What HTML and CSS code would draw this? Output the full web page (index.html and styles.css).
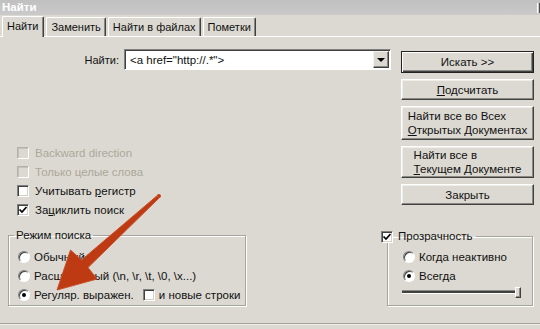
FILE: index.html
```html
<!DOCTYPE html>
<html lang="ru">
<head>
  <meta charset="UTF-8">
  <title>Найти</title>
  <link rel="stylesheet" href="styles.css">
</head>
<body>
  <div class="window">

    <!-- Заголовок окна -->
    <div class="titlebar">
      <span>Найти</span>
      <span class="tb-edge"></span>
    </div>

    <!-- Вкладки -->
    <div class="tabs">
      <div class="tab active">Найти</div>
      <div class="tab">Заменить</div>
      <div class="tab">Найти в файлах</div>
      <div class="tab">Пометки</div>
    </div>

    <div class="panel">
      <div class="top">
        <div class="left">
          <div class="find-row">
            <label>Найти:</label>
            <div class="combo">
              <span class="combo-text">&lt;a href="http://.*"&gt;</span>
              <span class="combo-btn"><span class="tri"></span></span>
            </div>
          </div>

          <div class="checks">
            <div class="check disabled"><span class="cb"></span><span>Backward direction</span></div>
            <div class="check disabled"><span class="cb"></span><span>Только целые слова</span></div>
            <div class="check"><span class="cb"></span><span>Учитывать <u>р</u>егистр</span></div>
            <div class="check"><span class="cb checked"><svg viewBox="0 0 10 10"><path d="M1.5 4.5 L4 7 L8.5 2" /></svg></span><span>За<u>ц</u>иклить поиск</span></div>
          </div>
        </div>

        <div class="buttons">
          <div class="btn default">Искать &gt;&gt;</div>
          <div class="btn"><span><u>П</u>одсчитать</span></div>
          <div class="btn tall"><span>Найти все во Всех<br><u>О</u>ткрытых Документах</span></div>
          <div class="btn tall2"><span>Найти все в<br><u>Т</u>екущем Документе</span></div>
          <div class="btn">Закрыть</div>
        </div>
      </div>

      <div class="groups">
        <fieldset class="group mode">
          <legend>Режим поиска</legend>
          <div class="rows">
            <div class="rrow"><span class="rb"></span>Обычный</div>
            <div class="rrow"><span class="rb"></span>Расширенный (\n, \r, \t, \0, \x...)</div>
            <div class="rrow"><span class="rb on"></span>Регуляр. выражен.<span class="cb sep"></span>и новые строки</div>
          </div>
        </fieldset>

        <fieldset class="group transp">
          <legend><span class="cb checked"><svg viewBox="0 0 10 10"><path d="M1.5 4.5 L4 7 L8.5 2" /></svg></span>Прозрачность</legend>
          <div class="rows">
            <div class="rrow"><span class="rb"></span>Когда неактивно</div>
            <div class="rrow"><span class="rb on"></span>Всегда</div>
            <div class="slider"><span class="track"></span><span class="thumb"></span></div>
          </div>
        </fieldset>
      </div>
    </div>

    <div class="footer"></div>

    <!-- Стрелка-подсказка поверх окна -->
    <svg class="arrow" width="540" height="329" viewBox="0 0 540 329">
      <polygon points="158,194.9 81.5,260 70.5,250 57,290 97,279 88,267.5 160,197.1" />
      <circle cx="159" cy="196" r="1.6" />
    </svg>
  </div>
</body>
</html>
```

FILE: styles.css
```css
/* Окно в стиле Windows XP classic */
body {
  margin: 0;
  font: 11px "Liberation Sans", Arial, sans-serif;
  color: #111;
  background: #dcd9d2;
}

.window {
  position: relative;
  width: 540px;
  height: 329px;
  overflow: hidden;
  background: #dcd9d2;
}

.titlebar {
  display: flex;
  height: 15px;
  padding-left: 2px;
  line-height: 15px;
  font-weight: bold;
  font-size: 11.5px;
  color: #fff;
  background: linear-gradient(#c0c0c0, #cacaca);
}

.tb-edge {
  margin-left: auto;
  width: 1px;
  height: 10px;
  margin-top: 3px;
  border-left: 1px solid #fff;
  border-right: 1px solid #505050;
}

/* Вкладки */
.tabs {
  display: flex;
  align-items: flex-end;
  gap: 2px;
  height: 21px;
  padding-left: 2px;
  border-bottom: 1px solid #fff;
}

.tab {
  height: 17px;
  padding: 1px 4px 0 4px;
  line-height: 16px;
  border: 1px solid #fff;
  border-right-color: #404040;
  border-bottom: none;
  border-radius: 2px 2px 0 0;
  box-shadow: inset -1px 0 #8a8882;
}

.tab.active {
  height: 20px;
  margin-bottom: -1px;
  padding: 0 5px 0 4px;
  line-height: 19px;
  background: #dcd9d2;
}

/* Верхняя часть */
.top {
  display: flex;
  height: 192px;
}

.left {
  width: 401px;
}

.find-row {
  display: flex;
  align-items: center;
  justify-content: flex-end;
  gap: 5px;
  margin-top: 12px;
  padding-right: 10px;
}

.combo {
  display: flex;
  align-items: center;
  box-sizing: border-box;
  width: 267px;
  height: 21px;
  border: 1px solid;
  border-color: #808080 #fff #fff #808080;
  box-shadow: inset 1px 1px #404040;
  background: #fff;
}

.combo-text {
  flex: 1;
  padding-left: 5px;
  font-size: 11.5px;
}

.combo-btn {
  display: flex;
  align-items: center;
  justify-content: center;
  box-sizing: border-box;
  width: 16px;
  height: 17px;
  margin-right: 1px;
  border: 1px solid;
  border-color: #f4f3ef #404040 #404040 #f4f3ef;
  box-shadow: inset -1px -1px #8a8882;
  background: #dcd9d2;
}

.tri {
  width: 0;
  height: 0;
  border-left: 4px solid transparent;
  border-right: 4px solid transparent;
  border-top: 4px solid #000;
  margin-top: 1px;
}

.checks {
  display: flex;
  flex-direction: column;
  margin-top: 73px;
  padding-left: 17px;
}

.check {
  display: flex;
  align-items: center;
  gap: 6px;
  height: 19px;
  font-size: 11.5px;
}

.check.disabled {
  color: #aca899;
}

.cb {
  position: relative;
  box-sizing: border-box;
  width: 12px;
  height: 12px;
  border: 1px solid;
  border-color: #808080 #fff #fff #808080;
  box-shadow: inset 1px 1px #404040, inset -1px -1px #d4d0c8;
  background: #fff;
}

.disabled .cb {
  border-color: #b4b1aa #fff #fff #b4b1aa;
  box-shadow: inset 1px 1px #c4c1ba;
  background: #dcd9d2;
}

.cb svg {
  display: block;
  width: 10px;
  height: 10px;
}

.cb path {
  fill: none;
  stroke: #000;
  stroke-width: 1.7;
}

/* Кнопки справа */
.buttons {
  display: flex;
  flex-direction: column;
  gap: 6px;
  width: 133px;
  margin-top: 14px;
}

.btn {
  display: flex;
  align-items: center;
  justify-content: center;
  box-sizing: border-box;
  height: 21px;
  border: 1px solid;
  border-color: #fff #404040 #404040 #fff;
  box-shadow: inset -1px -1px #8a8882, inset 1px 1px #efede8;
  background: #dcd9d2;
  font-size: 11.5px;
  line-height: 14px;
}

.btn.default {
  height: 22px;
  border-color: #222;
  box-shadow: inset 1px 1px #fff, inset -1px -1px #404040, inset -2px -2px #8a8882;
}

.btn.tall {
  height: 34px;
}

.btn.tall2 {
  height: 32px;
}

.btn span {
  text-align: left;
}

/* Групповые рамки */
.groups {
  display: flex;
  align-items: flex-start;
}

.group {
  box-sizing: border-box;
  margin: 0;
  padding: 0;
  min-width: 0;
  border: 1px solid #a7a49d;
  box-shadow: 1px 1px 0 #fff, inset 1px 1px 0 #fff;
  font-size: 11.5px;
}

.group legend {
  padding: 0 2px;
  line-height: 13px;
}

.mode {
  width: 238px;
  height: 77px;
  margin-left: 8px;
}

.mode legend {
  margin-left: 5px;
}

.mode .rows {
  padding: 5px 0 0 9px;
}

.transp {
  width: 146px;
  height: 76px;
  margin: 1px 7px 0 auto;
}

.transp legend {
  display: flex;
  align-items: center;
  gap: 5px;
  margin-left: -7px;
  padding: 0 3px 0 0;
}

.transp .rows {
  padding: 4px 0 0 15px;
}

.rrow {
  display: flex;
  align-items: center;
  gap: 4px;
  height: 19px;
}

.rb {
  position: relative;
  box-sizing: border-box;
  width: 12px;
  height: 12px;
  border-radius: 50%;
  border: 1px solid;
  border-color: #808080 #fff #fff #808080;
  box-shadow: inset 1px 1px #404040;
  background: #fff;
}

.rb.on::after {
  content: "";
  position: absolute;
  left: 3px;
  top: 3px;
  width: 4px;
  height: 4px;
  border-radius: 50%;
  background: #000;
}

.cb.sep {
  margin: 0 0 0 5px;
}

.slider {
  display: flex;
  align-items: center;
  width: 119px;
  height: 14px;
  margin-left: -1px;
}

.track {
  flex: 1;
  height: 2px;
  border-top: 1px solid #8a8882;
  border-bottom: 1px solid #fff;
  background: #404040;
}

.thumb {
  box-sizing: border-box;
  width: 6px;
  height: 11px;
  border: 1px solid;
  border-color: #fff #404040 #404040 #fff;
  box-shadow: inset -1px -1px #8a8882;
  background: #dcd9d2;
}

.footer {
  height: 5px;
  margin-top: 17px;
  border-top: 1px solid #a3a09a;
  box-shadow: inset 0 1px #f0efea;
}

/* Красная стрелка поверх */
.arrow {
  position: absolute;
  left: 0;
  top: 0;
  pointer-events: none;
}

.arrow polygon,
.arrow circle {
  fill: #be3a12;
  stroke: #c9502a;
  stroke-width: 1;
  stroke-linejoin: round;
}
```
